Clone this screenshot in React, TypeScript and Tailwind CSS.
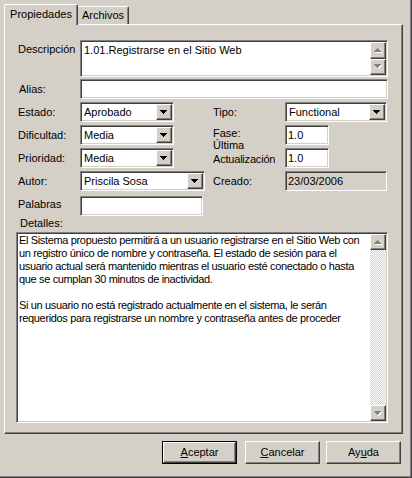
import React from "react";

const sunken =
  "border border-t-[#808080] border-l-[#808080] border-r-white border-b-white shadow-[inset_1px_1px_0_#404040,inset_-1px_-1px_0_#d4d0c8] p-px";
const raised =
  "border border-t-white border-l-white border-r-[#404040] border-b-[#404040] shadow-[inset_-1px_-1px_0_#808080]";

// pixel triangle, 7x4
function Arrow({ up = false, disabled = false }: { up?: boolean; disabled?: boolean }) {
  const rows = up ? [3, 2, 1, 0] : [0, 1, 2, 3];
  const tri = (dx: number, dy: number, fill: string) =>
    rows.map((inset, i) => (
      <rect key={fill + i} x={inset + dx} y={i + dy} width={7 - inset * 2} height={1} fill={fill} />
    ));
  return (
    <svg width="8" height="5" viewBox="0 0 8 5" shapeRendering="crispEdges">
      {disabled && tri(1, 1, "#ffffff")}
      {tri(0, 0, disabled ? "#808080" : "#000000")}
    </svg>
  );
}

function ScrollBtn({ up, className = "" }: { up?: boolean; className?: string }) {
  return (
    <div className={`${raised} bg-[#d4d0c8] flex items-center justify-center ${className}`}>
      <Arrow up={up} disabled />
    </div>
  );
}

function Combo({ value, w }: { value: string; w: string }) {
  return (
    <div className={`${sunken} bg-white h-[20px] flex ${w}`}>
      <div className="flex-1 pl-[2px] flex items-center whitespace-nowrap overflow-hidden">{value}</div>
      <div className={`${raised} w-[16px] bg-[#d4d0c8] flex items-center justify-center`}>
        <Arrow />
      </div>
    </div>
  );
}

function Field({ value = "", w, gray = false }: { value?: string; w: string; gray?: boolean }) {
  return (
    <div className={`${sunken} ${gray ? "bg-[#d4d0c8]" : "bg-white"} h-[20px] flex items-center pl-[2px] whitespace-nowrap ${w}`}>
      {value}
    </div>
  );
}

function Button({ children, def = false }: { children: React.ReactNode; def?: boolean }) {
  if (def) {
    return (
      <div className="w-[75px] h-[23px] border border-black">
        <div className={`${raised} h-full flex items-center justify-center`}>{children}</div>
      </div>
    );
  }
  return <div className={`${raised} w-[75px] h-[23px] flex items-center justify-center`}>{children}</div>;
}

const details = [
  "El Sistema propuesto permitirá a un usuario registrarse en el Sitio Web con",
  "un registro único de nombre y contraseña. El estado de sesión para el",
  "usuario actual será mantenido mientras el usuario esté conectado o hasta",
  "que se cumplan 30 minutos de inactividad.",
  "",
  "Si un usuario no está registrado actualmente en el sistema, le serán",
  "requeridos para registrarse un nombre y contraseña antes de proceder",
];

export default function App() {
  return (
    <div className="w-[412px] h-[478px] bg-[#d4d0c8] text-black text-[11px] leading-[13px] font-['Liberation_Sans',Arial,sans-serif] shadow-[inset_-1px_-1px_0_#404040,inset_-2px_-2px_0_#808080] overflow-hidden">
      {/* tabs */}
      <div className="relative z-10 h-[25px] pl-[4px] flex items-end">
        <div className="w-[74px] h-[21px] bg-[#d4d0c8] border-t border-l border-r border-t-white border-l-white border-r-[#404040] rounded-tl-[2px] rounded-tr-[2px] shadow-[inset_-1px_0_0_#808080] flex items-center justify-center pb-[2px]">
          Propiedades
        </div>
        <div className="w-[51px] h-[18px] mb-px border-t border-r border-t-white border-r-[#404040] rounded-tr-[2px] shadow-[inset_-1px_0_0_#808080] flex items-center justify-center">
          Archivos
        </div>
      </div>

      {/* panel */}
      <div className={`${raised} -mt-px ml-[4px] w-[399px] h-[410px] pl-[13px] flex flex-col`}>
        <div className="mt-[15px] flex">
          <div className="w-[62px] pt-[3px]">Descripción</div>
          <div className={`${sunken} bg-white w-[308px] h-[37px] flex`}>
            <div className="flex-1 pt-[2px] pl-[2px] whitespace-nowrap">1.01.Registrarse en el Sitio Web</div>
            <div className="w-[16px] flex flex-col">
              <ScrollBtn up className="flex-1" />
              <ScrollBtn className="flex-1" />
            </div>
          </div>
        </div>

        <div className="mt-[2px] flex items-center">
          <div className="w-[62px] pl-px">Alias:</div>
          <Field w="w-[308px]" />
        </div>

        <div className="mt-[3px] flex items-center">
          <div className="w-[195px] flex items-center">
            <div className="w-[62px]">Estado:</div>
            <Combo value="Aprobado" w="w-[94px]" />
          </div>
          <div className="w-[72px]">Tipo:</div>
          <Combo value="Functional" w="w-[102px]" />
        </div>

        <div className="mt-[3px] flex items-center">
          <div className="w-[195px] flex items-center">
            <div className="w-[62px]">Dificultad:</div>
            <Combo value="Media" w="w-[94px]" />
          </div>
          <div className="w-[72px] pb-[4px]">Fase:</div>
          <Field value="1.0" w="w-[44px]" />
        </div>

        <div className="mt-[3px] flex items-center h-[20px]">
          <div className="w-[195px] flex items-center">
            <div className="w-[62px]">Prioridad:</div>
            <Combo value="Media" w="w-[94px]" />
          </div>
          <div className="w-[72px] h-[20px] flex flex-col justify-end leading-[14px] pb-[2px]">
            <div>Última</div>
            <div className="tracking-[-0.2px]">Actualización</div>
          </div>
          <Field value="1.0" w="w-[44px]" />
        </div>

        <div className="mt-[3px] flex items-center">
          <div className="w-[195px] flex items-center">
            <div className="w-[62px]">Autor:</div>
            <Combo value="Priscila Sosa" w="w-[125px]" />
          </div>
          <div className="w-[72px]">Creado:</div>
          <Field value="23/03/2006" w="w-[102px]" gray />
        </div>

        <div className="mt-[5px] flex items-start">
          <div className="w-[62px] pt-[2px]">Palabras</div>
          <Field w="w-[123px]" />
        </div>

        <div className="mt-px pl-[2px]">Detalles:</div>

        <div className={`${sunken} -ml-[2px] mt-[2px] bg-white w-[372px] h-[191px] flex`}>
          <div className="flex-1 pl-px whitespace-pre overflow-hidden tracking-[-0.35px]">
            {details.map((l, i) => (
              <div key={i} className="h-[13px]">
                {l}
              </div>
            ))}
          </div>
          <div className="w-[16px] flex flex-col bg-[repeating-conic-gradient(#d4d0c8_0_25%,#ffffff_0_50%)] bg-[length:2px_2px]">
            <ScrollBtn up className="h-[16px]" />
            <div className="flex-1" />
            <ScrollBtn className="h-[16px]" />
          </div>
        </div>
      </div>

      {/* buttons */}
      <div className="mt-[7px] pl-[162px] flex">
        <Button def>
          <span className="underline">A</span>ceptar
        </Button>
        <div className="ml-[8px]">
          <Button>
            <span className="underline">C</span>ancelar
          </Button>
        </div>
        <div className="ml-[6px]">
          <Button>
            Ay<span className="underline">u</span>da
          </Button>
        </div>
      </div>
    </div>
  );
}
